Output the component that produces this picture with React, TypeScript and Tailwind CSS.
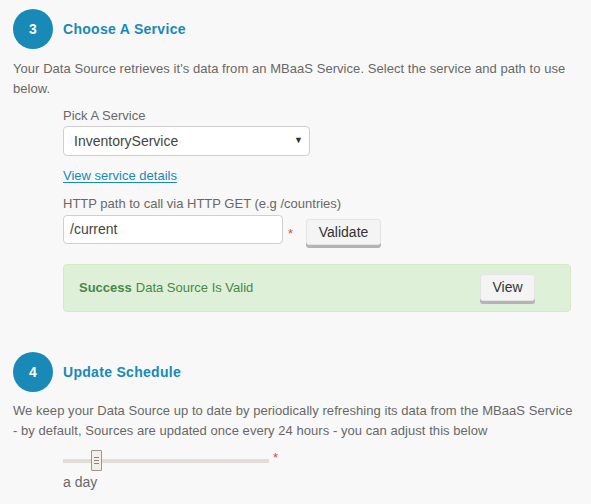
import React from "react";

function StepCircle({ n }: { n: number }) {
    return (
        <div className="w-10 h-10 rounded-full bg-[#1989b8] text-white flex items-center justify-center text-[14px] font-bold">
            {n}
        </div>
    );
}

function GrayButton({ label, className }: { label: string; className?: string }) {
    return (
        <button
            className={
                "bg-[#f4f4f4] border border-[#e4e4e4] rounded-[3px] shadow-[0_3px_0_#b4b4b4] text-[14px] text-[#333] " +
                (className ?? "")
            }
        >
            {label}
        </button>
    );
}

export default function App() {
    return (
        <div
            className="w-[591px] h-[504px] bg-[#f8f8f8] pl-[13px] pt-[9px] text-[13px] text-[#686868] overflow-hidden"
            style={{ fontFamily: '"Liberation Sans", Arial, sans-serif' }}
        >
            {/* step 3 */}
            <div className="flex items-center gap-[10px]">
                <StepCircle n={3} />
                <h2 className="text-[14px] font-bold text-[#1989b8] tracking-[0.3px]">Choose A Service</h2>
            </div>
            <p className="mt-[10px] leading-[20px] pr-[20px] tracking-[0.05px]">
                Your Data Source retrieves it's data from an MBaaS Service. Select the service and path to use below.
            </p>

            <div className="ml-[50px] mt-[8px]">
                <div className="leading-[18px]">Pick A Service</div>
                <div className="mt-[1px] w-[247px] h-[30px] bg-white border border-[#cfcfcf] rounded-[4px] flex items-center justify-between pl-[10px] pr-[6px]">
                    <span className="text-[14px] text-[#444]">InventoryService</span>
                    <span className="text-[9px] text-[#333]">▼</span>
                </div>
                <a href="#" className="block mt-[10px] leading-[20px] text-[#1989b8] underline underline-offset-2">
                    View service details
                </a>
                <div className="mt-[9px] leading-[18px]">HTTP path to call via HTTP GET (e.g /countries)</div>
                <div className="mt-[2px] flex items-start">
                    <div className="w-[220px] h-[29px] bg-white border border-[#cfcfcf] rounded-[4px] flex items-center pl-[6px] text-[14px] text-[#444]">
                        /current
                    </div>
                    <span className="ml-[5px] mt-[9px] text-[#e24b3b] text-[13px]">*</span>
                    <GrayButton label="Validate" className="ml-[13px] mt-[4px] w-[75px] h-[26px]" />
                </div>

                <div className="mt-[19px] mr-[20px] h-[48px] bg-[#dff0d8] border border-[#d6e9c6] rounded-[4px] flex items-center pl-[15px] pr-[35px] text-[#468847]">
                    <span className="font-bold">Success</span>
                    <span className="ml-[4px]">Data Source Is Valid</span>
                    <GrayButton label="View" className="ml-auto w-[55px] h-[27px] mb-[2px]" />
                </div>
            </div>

            {/* step 4 */}
            <div className="mt-[40px] flex items-center gap-[10px]">
                <StepCircle n={4} />
                <h2 className="text-[14px] font-bold text-[#1989b8] tracking-[0.3px]">Update Schedule</h2>
            </div>
            <p className="mt-[9px] leading-[20px] pr-[18px] tracking-[0.05px]">
                We keep your Data Source up to date by periodically refreshing its data from the MBaaS Service - by default, Sources are updated once every 24 hours - you can adjust this below
            </p>

            <div className="ml-[50px] mt-[9px]">
                <div className="flex items-start">
                    <div className="relative w-[206px] h-[22px]">
                        <div className="absolute left-0 right-0 top-[9px] h-[4px] bg-[#e2ddd7]" />
                        <div className="absolute left-[28px] top-0 w-[11px] h-[21px] bg-[#f2efeb] border border-[#9c968f] rounded-[1px] flex flex-col items-center justify-center gap-[2px]">
                            <span className="block w-[5px] h-px bg-[#8a847e]" />
                            <span className="block w-[5px] h-px bg-[#8a847e]" />
                            <span className="block w-[5px] h-px bg-[#8a847e]" />
                        </div>
                    </div>
                    <span className="ml-[4px] mt-[1px] text-[#e24b3b] leading-[14px]">*</span>
                </div>
                <div className="mt-[1px] leading-[18px] text-[14px]">a day</div>
            </div>
        </div>
    );
}
